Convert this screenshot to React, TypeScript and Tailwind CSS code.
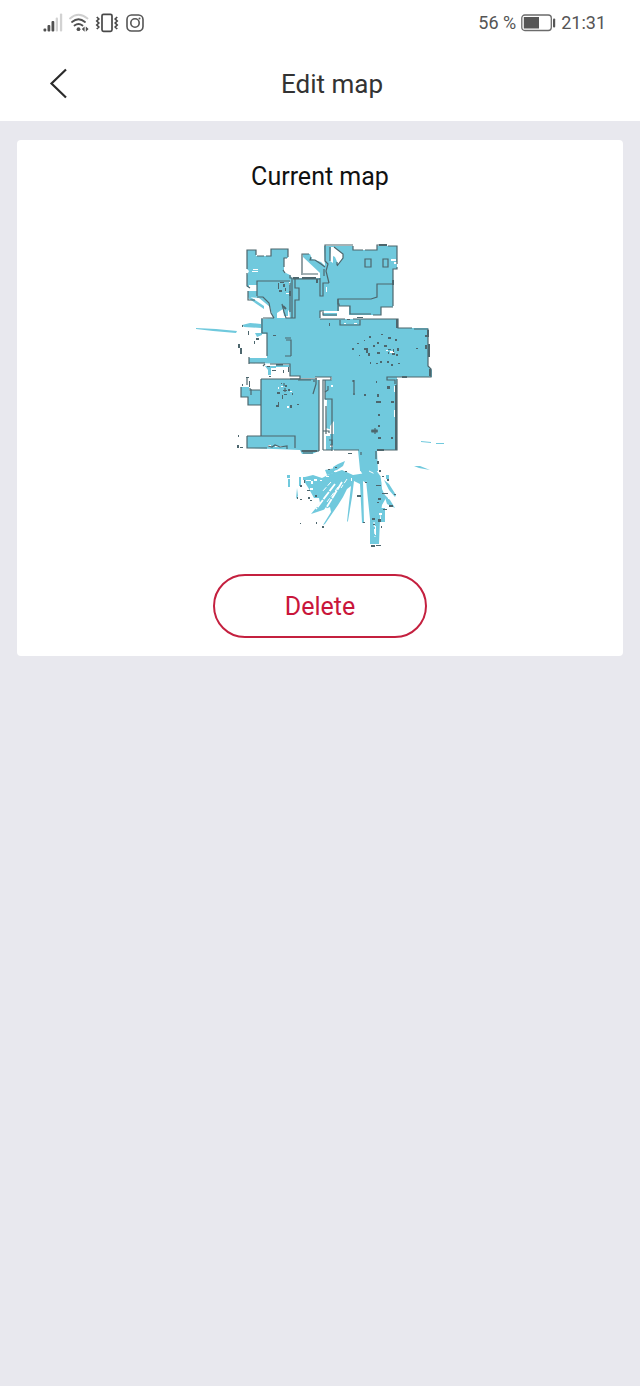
const SignalIcon = () => (
  <svg className="h-5 w-5" viewBox="0 0 20 20" aria-hidden="true">
    <g fill="#505050">
      <rect x="0.5" y="15.5" width="2.8" height="3" rx="1" />
      <rect x="4.5" y="12" width="2.8" height="6.5" rx="1" />
      <rect x="8.5" y="8" width="2.8" height="10.5" rx="1" />
    </g>
    <g fill="#d2d2d2">
      <rect x="12.7" y="4.5" width="2.3" height="14" rx="1" />
      <rect x="16.9" y="0.5" width="2.3" height="18" rx="1" />
    </g>
  </svg>
);

const WifiIcon = () => (
  <svg className="h-5 w-5" viewBox="0 0 20 20" fill="none" strokeLinecap="round" aria-hidden="true">
    <path d="M1 5.5Q9.5 -2 18.5 5.5" stroke="#cfcfcf" strokeWidth="1.8" />
    <path d="M3 9Q9.500 3.500 16 9M5.500 12.500Q9.500 9.500 13.500 12.500" stroke="#505050" strokeWidth="1.8" />
    <circle cx="9.5" cy="16.2" r="1.9" fill="#505050" />
    <path d="M15.600 13.400v5.400l-2.800-2.700zM16.800 13.400v5.400l2.800-2.700z" fill="#505050" />
  </svg>
);

const VibrateIcon = () => (
  <svg className="h-5 w-6" viewBox="0 0 24 20" fill="none" stroke="#484848" aria-hidden="true">
    <rect x="7" y="1.3" width="10" height="17" rx="1.5" strokeWidth="1.7" />
    <path
      d="M1.800 4l2 2-2 2 2 2-2 2 2 2-2 2M22.200 4l-2 2 2 2-2 2 2 2-2 2 2 2"
      strokeWidth="1.7"
    />
  </svg>
);

const InstagramIcon = () => (
  <svg className="h-5 w-5" viewBox="0 0 20 20" fill="none" stroke="#555" aria-hidden="true">
    <rect x="2" y="2" width="16" height="16" rx="4.5" strokeWidth="1.6" />
    <circle cx="10" cy="10" r="4.2" strokeWidth="1.6" />
    <circle cx="14.5" cy="5.5" r="1" fill="#555" stroke="none" />
  </svg>
);

const BatteryIcon = () => (
  <svg className="h-[18px] w-[35px]" viewBox="0 0 35 18" aria-hidden="true">
    <rect x="0.8" y="1" width="29.5" height="15.5" rx="3" fill="none" stroke="#6b6b6b" strokeWidth="1.3" />
    <rect x="2.8" y="3" width="15.2" height="11.5" fill="#565656" />
    <rect x="32" y="4.5" width="2.2" height="9" rx="1" fill="#565656" />
  </svg>
);

// obstacles picked up by the lidar: x, y, width, height
const obstacles = [
  [352, 348, 2, 2], [357, 343, 2, 1], [364, 340, 1, 1], [369, 336, 2, 2], [381, 334, 2, 1], [388, 337, 3, 2],
  [395, 339, 2, 2], [377, 342, 2, 2], [373, 345, 2, 2], [384, 345, 3, 2], [364, 348, 4, 2], [366, 350, 2, 3],
  [368, 353, 2, 3], [377, 352, 3, 2], [359, 355, 1, 1], [370, 362, 1, 2], [376, 363, 2, 1], [380, 361, 2, 2],
  [387, 361, 2, 2], [391, 364, 2, 2], [398, 363, 2, 1], [388, 349, 3, 1], [393, 349, 1, 3], [397, 348, 2, 3],
  [388, 352, 1, 2], [392, 353, 3, 2], [396, 354, 2, 2], [416, 348, 2, 1],
  [364, 394, 2, 2], [376, 381, 1, 2], [377, 394, 2, 3], [376, 401, 5, 2], [378, 414, 2, 2], [378, 425, 2, 2],
  [378, 437, 3, 2], [391, 401, 3, 2], [391, 437, 2, 2], [387, 386, 3, 3],
  [281, 383, 1, 1], [285, 385, 2, 2], [288, 389, 2, 2], [277, 392, 3, 2], [283, 390, 4, 1], [292, 393, 1, 2],
  [282, 395, 1, 4], [284, 394, 3, 1], [276, 405, 3, 2], [278, 402, 1, 3], [290, 405, 2, 3], [297, 404, 2, 1],
  [278, 283, 1, 6], [280, 282, 4, 1], [283, 284, 2, 3], [279, 290, 3, 2], [285, 288, 1, 3], [273, 335, 3, 1],
  [238, 344, 2, 4], [240, 348, 2, 6], [248, 331, 1, 4], [242, 384, 1, 2], [246, 377, 3, 1], [249, 381, 1, 6],
  [238, 435, 1, 2], [237, 445, 2, 3], [240, 447, 3, 1], [256, 338, 3, 2], [254, 341, 1, 3], [242, 325, 1, 2],
  [267, 366, 3, 1], [272, 370, 4, 1], [283, 370, 1, 3], [288, 367, 1, 5], [269, 376, 2, 1],
  [347, 319, 3, 1], [357, 317, 6, 1], [329, 323, 1, 3], [402, 376, 5, 2], [425, 335, 3, 2], [425, 345, 2, 4],
  [300, 485, 2, 2], [304, 480, 1, 3], [307, 490, 3, 1], [308, 497, 2, 2], [310, 500, 2, 1], [315, 495, 2, 2],
  [300, 499, 2, 1], [297, 497, 1, 2], [328, 469, 2, 1], [335, 467, 2, 1], [345, 471, 2, 1],
  [357, 495, 4, 2], [365, 482, 2, 1], [322, 526, 2, 2], [316, 522, 1, 2], [300, 523, 1, 1], [363, 522, 2, 1],
  [372, 518, 3, 2], [378, 519, 3, 3], [373, 524, 2, 1], [383, 509, 4, 1], [376, 485, 5, 1], [382, 493, 6, 1],
  [378, 498, 3, 2], [389, 505, 4, 2], [394, 494, 2, 1], [387, 479, 2, 2], [382, 476, 2, 1], [371, 545, 4, 2],
  [376, 545, 5, 1], [379, 470, 2, 2], [377, 461, 2, 3], [348, 453, 4, 1], [377, 502, 2, 1], [381, 526, 1, 2],
];

const whiteSpots = [
  [253, 269, 5, 1], [252, 271, 6, 1], [249, 285, 8, 2], [284, 267, 2, 3], [391, 259, 5, 2], [394, 262, 3, 2],
  [289, 282, 1, 3], [286, 293, 3, 1], [329, 313, 3, 1], [335, 313, 3, 1], [344, 323, 2, 1], [354, 323, 3, 1],
  [390, 351, 4, 2], [386, 350, 2, 1], [394, 386, 2, 6], [394, 410, 2, 7], [281, 386, 2, 1], [287, 406, 2, 2],
  [278, 387, 1, 2], [290, 391, 2, 1], [331, 385, 2, 2], [327, 431, 4, 3], [330, 445, 3, 2], [268, 445, 3, 2],
  [275, 446, 8, 1], [326, 287, 1, 5], [302, 483, 1, 6], [306, 480, 5, 1], [311, 481, 2, 3], [305, 488, 3, 1],
  [314, 479, 3, 2], [384, 489, 3, 1], [388, 498, 3, 1], [375, 526, 1, 9], [379, 513, 3, 2], [386, 486, 1, 4],
  [334, 471, 3, 1], [320, 480, 2, 1], [310, 488, 3, 2], [326, 476, 3, 1], [351, 478, 1, 3],
];

const FloorMap = () => (
  <svg className="h-80 w-[260px]" viewBox="190 235 260 320" role="img" aria-label="Scanned floor plan">
    <g fill="#70c9dd">
      {/* upper rooms and hall */}
      <path d="M247 250H256V256H271V249H288V258H284V272L290 275 292 278H320V273L303 257 303 254H310L312 259 321 262 325 266 324 246H353V250H377V246H397V269H393V307H381V315H349V306H339V311H320V319H398V328H428V366L432 370V377H397V450H377L378 471H360V450H330V378H300V376H290V364L249 363V358H267V334H261V319L273 318 270 307 259 298 248 297V291L257 291V287H247V275L249 271 247 269Z" />
      {/* lower left room */}
      <path d="M261 379H319V451L312 454H302L300 450 247 448V436H261V405H248V397H241V387H249V390H261Z" />
      <path d="M325 380H333V400H325ZM327 400H332V430L326 428ZM326 436H333V450H326Z" />
      {/* scans through windows and doors */}
      <path d="M196 328L216 329 237 331 236 333 213 331 196 329ZM242 325L250 323 261 324V328L244 327ZM249 296L264 306 264 309 248 298ZM255 333H262V335L257 337ZM265 366H276V368H271V375H268V370ZM276 365H290V367H276ZM421 441L431 442V443L421 442ZM436 443L444 443V444L436 444ZM414 466L420 466 430 470 419 468Z" />
      {/* light rays below the entrance */}
      <path d="M305 477L313 475 322 478 330 474 342 470 353 475 366 473V483L363 481 364 523H362L360 484 354 481 352 497 348 521 347 522 349 503 351 486 347 489 343 497 338 505 325 524 323 525 331 512 330 507 323 510 311 514 320 503 319 498 314 498 309 489 304 481Z" />
      <path d="M358 450H377V463L376 470 381 477 382 489 386 498 382 505 380 519 379 544H370V519L368 500 366 480 360 470Z" />
      <path d="M299 477H301V486H299ZM297 488L298 496 296 499ZM287 475H290V478H287ZM288 479H290V487H288ZM303 477H307V480H303ZM386 475H389V479H386ZM384 480L389 484 396 495 395 497 389 490ZM384 494L390 500 395 508 387 504ZM381 508H385V522H381ZM333 467L338 464 345 461 343 466 337 470 333 471ZM325 470L335 468V473L327 475Z" />
    </g>

    <g fill="#fff">
      <path d="M331 247H334L343 254 343 258 338 264 335 257 333 256V263L330 261ZM302 258L305 261 308 268 315 271 318 274H303ZM277 313L283 309 284 316H288V311L289 310 290 318H277Z" />
      <path d="M320 312H338V318H320ZM330 426L334 421 334 434H330ZM315 377H332V380H321V451H319V380H315Z" />
      {whiteSpots.map(([x, y, w, h]) => (
        <rect key={`${x}-${y}`} x={x} y={y} width={w} height={h} />
      ))}
    </g>

    {/* gaps between the light rays */}
    <g fill="none" stroke="#fff">
      <path d="M342 482L325 510M335 484L316 509" strokeDasharray="9 1" strokeWidth="1.8" />
      <path d="M338 487L327 502M331 482L322 492M347 479L341 488M374 522L375 537M381 477L384 489M369 471L375 474" strokeDasharray="5 2" />
    </g>

    <g fill="#70c9dd">
      <path d="M323 313H337V316H323Z" />
    </g>

    {/* walls */}
    <g fill="none" stroke="#4d666d" strokeWidth="1.2">
      <path d="M247 258V250H256V255M257 256H264M266 256H271V249H288V257M287 258H284V267M283 270L285 273M247 258V269M247 273V286L250 288M257 296V281H290M290 275V278H292V318M290 283V312M248 291V300H255M257 297H263L269 303 271 313 274 318M263 318H274M282 304L284 312 286 318H295V300H299V288H295V279" />
      <path d="M293 279H320M320 278V296H323V283H329M302 275V254H309M303 274H318M311 257L310 260H315L321 264 325 267M329 283L326 271 328 264 325 261V245H353M353 246V250H363M365 250H377V245H385M388 246H397V264M397 267V269H393V306M393 307H381V315H373M371 314H350V306H339V304H338V299H371L377 297V284H392M330 247V261M334 247L343 254V258L337 266M337 262V265M324 269V276" />
      <path d="M320 318V311H324M320 319H345M353 319H398V328H412M414 329H428V366L431 369V377H387V380H395V384M323 312V315H337M338 299V311M340 320V325H360V320M262 318V333H267V356M249 357V364M249 363H265M270 364H290V375M290 364V376H300V379H290M285 338H291M286 340H291V356M285 356H291M276 365H283M292 376H300" />
      <path d="M261 379H317M261 379V436H295V448M319 380V451M316 378V384L313 394M315 377H331V380H323V450M325 380V399H332V451M261 405H248V397H241V387M250 388V390H260M247 436H261M247 436V448H267M268 446L272 447 275 445 280 447 287 446V449M301 451H319M303 453H313M323 450H332M334 450H359M361 452V455M397 379V450H388M376 451V459M377 450H389" />
      <path d="M354 380V395M353 380V382M353 394H355M371 431H378M375 428V434M372 430H377V432H372ZM365 259H371V267H365ZM383 259H388V267H383ZM284 383V386M285 388V392M328 386V390L325 392M329 440H332V445H330M326 406V434M323 431H329V433M247 377V385M251 389V395M265 364L263 366M298 380H311M314 380V382" />
    </g>
    <g fill="none" stroke="#4d666d" strokeWidth="2">
      <path d="M393 280V285M397 319V328M428 330V337M429 344V357M396 385V450M293 278H299M302 278H316M317 283V279M290 291V296M430 369V376M377 450H384M317 451H302M286 309L283 306M379 245H387" />
    </g>

    <g fill="#4d666d">
      {obstacles.map(([x, y, w, h]) => (
        <rect key={`${x}-${y}`} x={x} y={y} width={w} height={h} />
      ))}
    </g>
  </svg>
);

const App = () => {
  return (
    <div className="min-h-screen bg-[#e8e8ee] font-['Roboto',sans-serif]">
      <header className="bg-white">
        <div className="flex h-[46px] items-center justify-between pl-[43px] pr-[34px] text-[#555]">
          <div className="flex items-center gap-1.5">
            <SignalIcon />
            <WifiIcon />
            <VibrateIcon />
            <InstagramIcon />
          </div>
          <div className="flex items-center gap-[5px] text-lg">
            <span>56 %</span>
            <BatteryIcon />
            <span>21:31</span>
          </div>
        </div>

        <div className="grid h-[75px] grid-cols-[104px_1fr_80px] items-center">
          <button type="button" aria-label="Back" className="flex pl-[46px]">
            <svg className="h-8 w-6" viewBox="0 0 24 32" fill="none" stroke="#2b2b2b" strokeWidth="2.2" aria-hidden="true">
              <path d="M20 1.500L5.500 15.500 20 29.500" />
            </svg>
          </button>
          <h1 className="text-center text-[26px] leading-8 text-[#333]">Edit map</h1>
        </div>
      </header>

      <main className="px-[17px] pt-[19px]">
        <section className="flex flex-col items-center rounded bg-white pb-[18px] pt-[21px]">
          <h2 className="text-[25px] leading-8 text-[#111]">Current map</h2>
          <div className="mt-[42px]">
            <FloorMap />
          </div>
          <button
            type="button"
            className="mt-[19px] h-16 w-[214px] rounded-full border-2 border-[#c4203f] pt-0.5 text-[25px] leading-8 text-[#c9163a]"
          >
            Delete
          </button>
        </section>
      </main>
    </div>
  );
};

export default App;
